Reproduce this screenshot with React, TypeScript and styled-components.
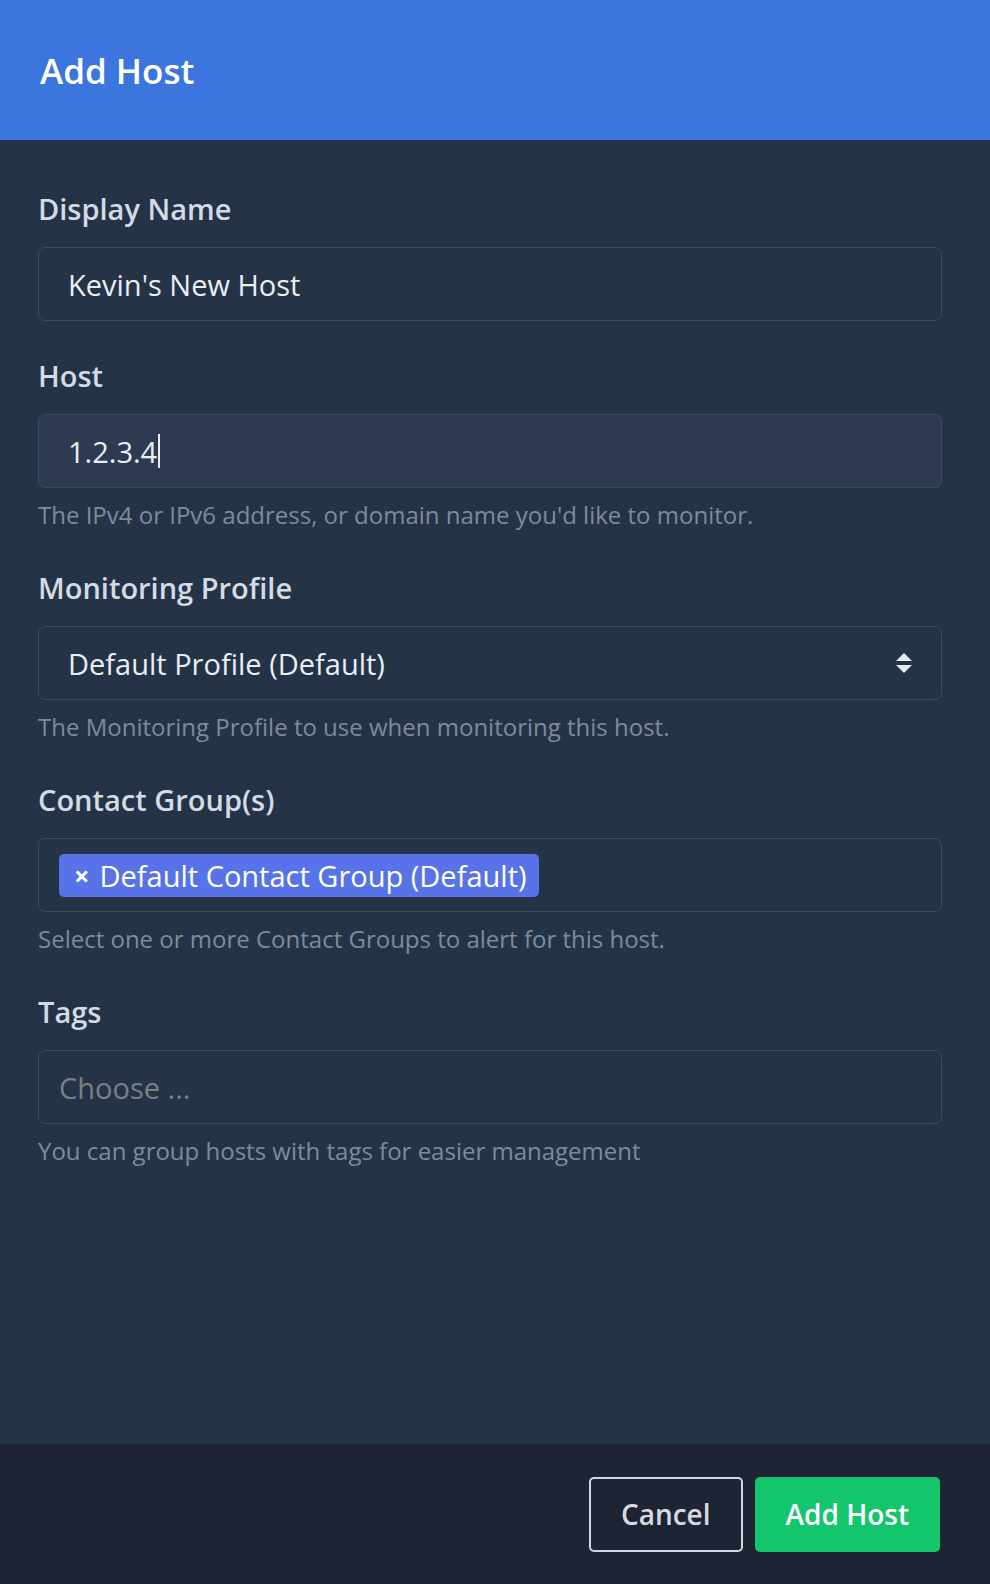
import React, { FC } from "react";
import styled, { createGlobalStyle } from "styled-components";

const GlobalStyle = createGlobalStyle`
  html, body {
    margin: 0;
    padding: 0;
    background: #253347;
  }

  * {
    box-sizing: border-box;
  }

  body {
    font-family: "Open Sans", "Noto Sans", "Liberation Sans", sans-serif;
  }
`;

interface FieldProps {
  label: string;
  help?: string;
  children: React.ReactNode;
}

const Field: FC<FieldProps> = ({ label, help, children }) => (
  <FieldGroup>
    <Label>{label}</Label>
    {children}
    {help && <HelpText>{help}</HelpText>}
  </FieldGroup>
);

const SelectArrows = () => (
  <svg width="18" height="22" viewBox="0 0 18 22" aria-hidden="true">
    <path d="M9 1 L17 9 L1 9 Z" fill="#e6ebf1" />
    <path d="M1 13 L17 13 L9 21 Z" fill="#e6ebf1" />
  </svg>
);

const App: FC = () => {
  return (
    <Page>
      <GlobalStyle />
      <Header>
        <Title>Add Host</Title>
      </Header>
      <Body>
        <Field label="Display Name">
          <TextBox>Kevin's New Host</TextBox>
        </Field>
        <Field
          label="Host"
          help="The IPv4 or IPv6 address, or domain name you'd like to monitor."
        >
          <TextBox $focused>
            1.2.3.4
            <Caret />
          </TextBox>
        </Field>
        <Field
          label="Monitoring Profile"
          help="The Monitoring Profile to use when monitoring this host."
        >
          <SelectBox>
            <span>Default Profile (Default)</span>
            <SelectArrows />
          </SelectBox>
        </Field>
        <Field
          label="Contact Group(s)"
          help="Select one or more Contact Groups to alert for this host."
        >
          <MultiBox>
            <Chip>
              <ChipRemove>×</ChipRemove>
              Default Contact Group (Default)
            </Chip>
          </MultiBox>
        </Field>
        <Field
          label="Tags"
          help="You can group hosts with tags for easier management"
        >
          <MultiBox>
            <Placeholder>Choose ...</Placeholder>
          </MultiBox>
        </Field>
      </Body>
      <Footer>
        <OutlineButton>Cancel</OutlineButton>
        <PrimaryButton>Add Host</PrimaryButton>
      </Footer>
    </Page>
  );
};

export default App;

const Page = styled.div`
  display: flex;
  flex-direction: column;
  min-height: 1584px;
  background: #253347;
`;

const Header = styled.header`
  display: flex;
  align-items: center;
  height: 140px;
  padding: 0 40px;
  background: #3c75dd;
`;

const Title = styled.h1`
  margin: 0;
  font-size: 35px;
  font-weight: 600;
  color: #ffffff;
`;

const Body = styled.main`
  flex: 1;
  display: flex;
  flex-direction: column;
  gap: 34px;
  padding: 48px 48px 40px 38px;
`;

const FieldGroup = styled.div`
  display: flex;
  flex-direction: column;
`;

const Label = styled.label`
  margin-bottom: 17px;
  font-size: 29px;
  line-height: 42px;
  font-weight: 600;
  color: #d3dbe4;
`;

const HelpText = styled.div`
  margin-top: 9px;
  font-size: 24px;
  line-height: 36px;
  color: #7d8b9d;
`;

const TextBox = styled.div<{ $focused?: boolean }>`
  display: flex;
  align-items: center;
  height: 74px;
  padding: 0 29px;
  border: 1.5px solid #3b4a5e;
  border-radius: 7px;
  background: ${({ $focused }) => ($focused ? "#2e3a51" : "transparent")};
  font-size: 29px;
  color: #e9eef4;
`;

const Caret = styled.span`
  display: inline-block;
  width: 1.5px;
  height: 34px;
  margin-left: 1px;
  background: #e9eef4;
`;

const SelectBox = styled(TextBox)`
  justify-content: space-between;
  padding-right: 28px;
`;

const MultiBox = styled.div`
  display: flex;
  align-items: center;
  height: 74px;
  padding: 0 20px;
  border: 1.5px solid #3b4a5e;
  border-radius: 7px;
  font-size: 29px;
`;

const Chip = styled.span`
  display: inline-flex;
  align-items: center;
  gap: 10px;
  height: 43px;
  padding: 0 12px 0 15px;
  border-radius: 5px;
  background: #5773e7;
  color: #ffffff;
`;

const ChipRemove = styled.span`
  font-size: 27px;
  font-weight: 700;
  line-height: 1;
`;

const Placeholder = styled.span`
  color: #7b7f86;
`;

const Footer = styled.footer`
  display: flex;
  justify-content: flex-end;
  align-items: center;
  gap: 12px;
  height: 140px;
  padding: 0 50px;
  background: #1f2434;
`;

const OutlineButton = styled.button`
  height: 75px;
  padding: 0 30px;
  border: 2px solid #d2d7de;
  border-radius: 5px;
  background: transparent;
  font-family: inherit;
  font-size: 28px;
  font-weight: 600;
  color: #d6dae0;
`;

const PrimaryButton = styled.button`
  height: 75px;
  padding: 0 31px;
  border: none;
  border-radius: 5px;
  background: #13c56b;
  font-family: inherit;
  font-size: 28px;
  font-weight: 600;
  color: #ffffff;
`;
